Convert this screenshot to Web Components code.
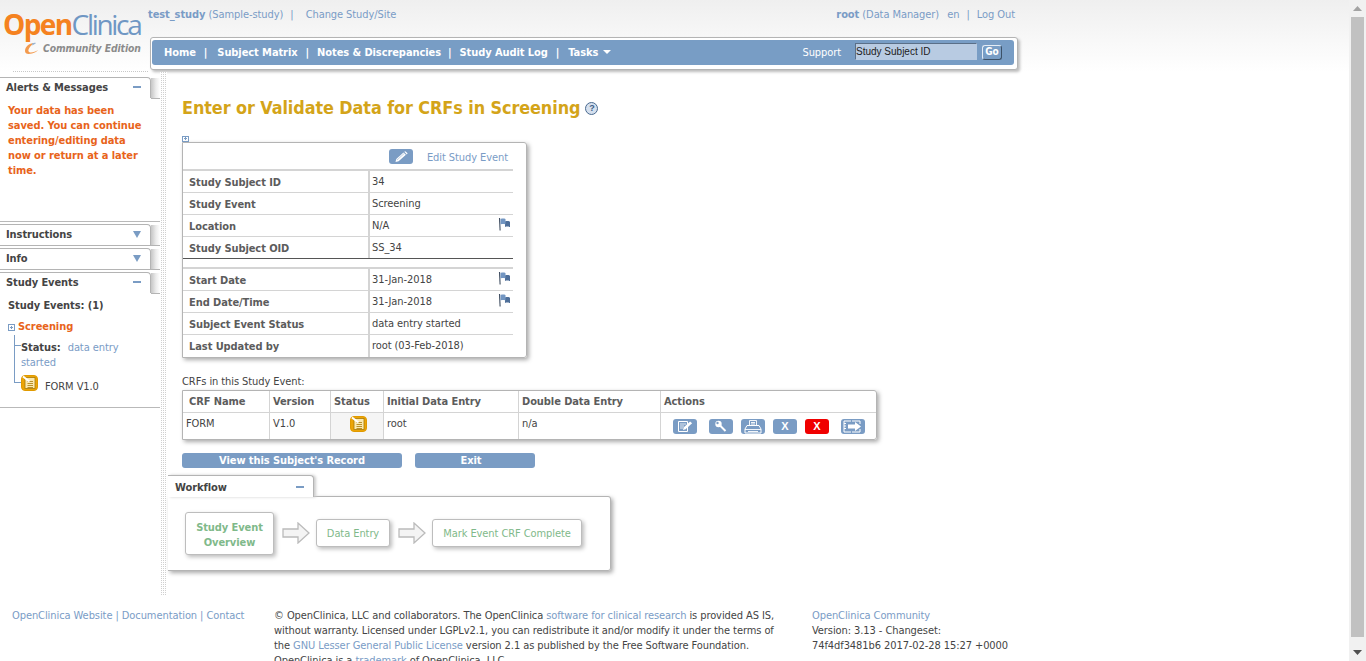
<!DOCTYPE html>
<html>
<head>
<meta charset="utf-8">
<title>OpenClinica</title>
<style>
html, body { margin: 0; height: 100%; overflow: hidden; background: #fff; }
body { font: 11px "DejaVu Sans Condensed", "Noto Sans", sans-serif; letter-spacing: -0.08px; color: #4f4f4f; }
</style>
</head>
<body>
<op-page>
  <op-header slot="head"></op-header>
  <op-sidebar slot="side">
    <op-panel label="Alerts &amp; Messages" open style="height:145px;margin-bottom:2px">
      <div style="padding:5px 14px 0 8px;color:#e8641b;font-weight:700;font-size:11px;line-height:15px;">Your data has been saved. You can continue entering/editing data now or return at a later time.</div>
    </op-panel>
    <op-panel label="Instructions"></op-panel>
    <op-panel label="Info"></op-panel>
    <op-panel label="Study Events" open style="height:136px"><op-event-tree></op-event-tree></op-panel>
  </op-sidebar>
  <op-event-page slot="main"></op-event-page>
  <op-footer slot="foot"></op-footer>
</op-page>
<script>
const LINK = '#7a9cc6';
const SANS = '"DejaVu Sans Condensed", "Noto Sans", sans-serif';

const ICONS = {
    flag: `<svg width="13" height="13" viewBox="0 0 13 13"><path d="M1.500 0l.6 12.500" stroke="#3f4d60" stroke-width="1.100"/><path d="M7 3.500c1.500-.6 3-.4 5 0v5.500c-2-.5-3.500-.6-5 0z" fill="#4f6f99"/><path d="M2.500 1c1.800-.6 3.500-.6 5 0v5.500c-1.500-.6-3.200-.6-5 0z" fill="#7396c2"/></svg>`,
    status: `<svg width="17" height="16" viewBox="0 0 17 16"><rect x=".5" y=".5" width="16" height="15" rx="3.500" fill="#eca507" stroke="#e09a00"/><rect x="4" y="2.500" width="10" height="11" fill="#fbe9b0" stroke="#a87a08" stroke-width=".8"/><path d="M6.500 6.500h5.500M6.500 8.500h5.500M6.500 10.500h5.500M6.500 12.500h5.500" stroke="#a87a08" stroke-width=".8"/><path d="M2 1.500l6.500 5" stroke="#fff" stroke-width="2"/></svg>`,
    edit: `<svg width="16" height="13" viewBox="0 0 16 13" fill="none"><path d="M1.500 1.500h9v10h-9z" stroke="#fff"/><path d="M3 4h6M3 6h4M3 8h3" stroke="#fff" stroke-width=".8"/><path d="M6 10l.6-2.500 6.500-6 2 1.800-6.500 6z" fill="#fff"/></svg>`,
    wrench: `<svg width="14" height="13" viewBox="0 0 14 13"><circle cx="4.500" cy="4" r="3.200" fill="#fff"/><circle cx="3.500" cy="3" r="1.200" fill="#7a9cc4"/><path d="M6 5.500l5.500 5.500" stroke="#fff" stroke-width="2"/></svg>`,
    print: `<svg width="18" height="14" viewBox="0 0 18 14" fill="none" stroke="#fff"><path d="M5.500 5.500v-5h7v5M7 2.500h4M7 4h4" stroke-width=".9"/><path d="M3 5.500h12l2 3.500v4H1V9z"/><path d="M1 9.500h16M4 11.500h10" stroke-width=".9"/></svg>`,
    out: `<svg width="20" height="13" viewBox="0 0 20 13" fill="none"><path d="M8 1H1v11h7M1 3.500h2M1 6h2M1 8.500h2" stroke="#fff"/><path d="M17 4V1H9M17 9v3H9" stroke="#fff"/><path d="M5 4.500h7V2l6 4.500-6 4.500V8.500H5z" fill="#fff"/></svg>`,
    pencil: `<svg width="16" height="12" viewBox="0 0 16 12"><path d="M2.500 11l.8-3 7.200-6.500 2.400 2.200L5.600 10.300z" fill="#fff"/><path d="M11.300.8l1-.6 2.300 2.100-.8 1.200z" fill="#fff"/><path d="M4 9l7-6.300" stroke="#a9bfd9" stroke-width=".7"/></svg>`
};

class OpPage extends HTMLElement {
    constructor () {
        super();
        this.root = this.attachShadow({mode: 'open'});
        this.root.innerHTML = `
            <style>
                :host { display: flex; height: 661px; overflow: hidden; }
                .page { flex: 1; min-width: 0; background: linear-gradient(#efefef, #fff 72px); }
                .middle { display: flex; height: 523px; }
                .strip {
                    width: 7px;
                    background: repeating-conic-gradient(#d0d0d0 0 25%, #fff 0 100%) 0 0 / 2px 2px;
                }
                .main { flex: 1; min-width: 0; }
            </style>
            <div class="page">
                <slot name="head"></slot>
                <div class="middle">
                    <slot name="side"></slot>
                    <div class="strip"></div>
                    <div class="main"><slot name="main"></slot></div>
                </div>
                <slot name="foot"></slot>
            </div>
            <op-scrollbar></op-scrollbar>
        `;
    }
}

class OpScrollbar extends HTMLElement {
    constructor () {
        super();
        this.root = this.attachShadow({mode: 'open'});
        this.root.innerHTML = `
            <style>
                :host { display: flex; flex-direction: column; width: 17px; background: #f1f1f1; align-items: center; }
                .arrow { height: 17px; flex: none; display: flex; align-items: center; justify-content: center; }
                .thumb { flex: 1; width: 13px; background: #c1c1c1; }
                .gap { height: 7px; flex: none; }
            </style>
            <div class="arrow"><svg width="9" height="5"><path d="M0 5L4.500 0 9 5z" fill="#a3a3a3"/></svg></div>
            <div class="thumb"></div>
            <div class="gap"></div>
            <div class="arrow"><svg width="9" height="5"><path d="M0 0h9L4.500 5z" fill="#505050"/></svg></div>
        `;
    }
}

class OpHeader extends HTMLElement {
    constructor () {
        super();
        this.root = this.attachShadow({mode: 'open'});
        this.root.innerHTML = `
            <style>
                :host { display: flex; height: 72px; }
                .link { color: ${LINK}; }
                .logo { width: 148px; flex: none; padding: 6px 0 0 3px; box-sizing: border-box; position: relative; }
                .logo::after { content: ""; position: absolute; left: 13px; right: 0; bottom: 0; border-bottom: 1px dotted #c8c8c8; }
                .word { font: 400 28px/36px "Open Sans", sans-serif; letter-spacing: -2.3px; color: #6f97c4; white-space: nowrap; }
                .word b { color: #f58220; font-weight: 700; letter-spacing: -1.6px; }
                .edition { display: flex; align-items: center; gap: 4px; margin: -1px 0 0 21px; font: italic 700 10.3px/14px ${SANS}; color: #8b8b8b; white-space: nowrap; }
                .rest { width: 870px; flex: none; }
                .top { display: flex; justify-content: space-between; padding: 7px 3px 0 0; height: 37px; box-sizing: border-box; line-height: 15px; white-space: nowrap; }
                .top b { font-weight: 700; }
                .sep { margin: 0 4px; }
                .sep.wide { margin-right: 9px; }
                .en { margin-left: 2px; }
                nav { margin-left: 2px; height: 33px; box-sizing: border-box; background: #fff; border: 1px solid #b4b4b4; border-radius: 3px; padding: 2px 3px 4px 1px; box-shadow: 2px 2px 3px #bbb; }
                .bar { height: 25px; background: #789dc5; border-radius: 3px; display: flex; align-items: center; padding-left: 12px; color: #fff; font-weight: 700; font-size: 11px; white-space: nowrap; }
                .bar i { font-style: normal; margin: 0 8px; font-weight: 700; }
                .bar i.a { margin-right: 10px; }
                .bar i.b { margin-left: 7px; }
                .bar i.c { margin-right: 9px; }
                .caret { display: inline-block; margin-left: 5px; border: 4px solid transparent; border-top: 4px solid #fff; border-bottom: 0; vertical-align: 2px; }
                .right { margin-left: auto; display: flex; align-items: center; }
                .support { font-weight: 400; }
                .search { width: 122px; height: 17px; margin: -2px 0 0 14px; box-sizing: border-box; background: #b8cbe2; border: 1px solid; border-color: #5a6f88 #b8cbe2 #b8cbe2 #5a6f88; color: #222; font: 400 10px/15px "Liberation Sans", sans-serif; letter-spacing: 0; }
                .go { width: 20px; height: 15px; box-sizing: border-box; margin: -1px 12px 0 5px; border: 1px solid #e4ecf5; border-right-color: #3c5168; border-bottom-color: #3c5168; border-radius: 3px; background: #789dc5; font-size: 10px; line-height: 12px; text-align: center; }
            </style>
            <div class="logo">
                <div class="word"><b>Open</b>Clinica</div>
                <div class="edition">
                    <svg width="15" height="13" viewBox="0 0 15 13"><path d="M10 1C5 1 1 5 1 9c0 3 3 3.500 7 2.500 3-.8 5-2 6-3.500-2 1.500-5 2.500-7 2.500S3.500 9 5 6.500 8 3 10 1z" fill="#f39a4e"/><path d="M8 1.500c1-.6 3-1 4-.5-1 1-2 1.500-3.500 2.500z" fill="#9ab5d3"/></svg>
                    <span>Community Edition</span>
                </div>
            </div>
            <div class="rest">
                <div class="top">
                    <div class="link"><b>test_study</b> (Sample-study)<span class="sep wide"> | </span> Change Study/Site</div>
                    <div class="link"><b>root</b> (Data Manager)&nbsp; <span class="en">en</span><span class="sep"> | </span>Log Out</div>
                </div>
                <nav><div class="bar">
                    <span>Home</span><i class="a">|</i><span>Subject Matrix</span><i>|</i><span>Notes &amp; Discrepancies</span><i class="b">|</i><span>Study Audit Log</span><i class="c">|</i><span>Tasks<b class="caret"></b></span>
                    <div class="right">
                        <span class="support">Support</span>
                        <div class="search">Study Subject ID</div>
                        <div class="go">Go</div>
                    </div>
                </div></nav>
            </div>
        `;
    }
}

class OpSidebar extends HTMLElement {
    constructor () {
        super();
        this.root = this.attachShadow({mode: 'open'});
        this.root.innerHTML = `
            <style>
                :host { display: block; width: 160px; flex: none; padding-top: 5px; box-sizing: border-box; }
            </style>
            <slot></slot>
        `;
    }
}

class OpPanel extends HTMLElement {
    constructor () {
        super();
        this.root = this.attachShadow({mode: 'open'});
        const open = this.hasAttribute('open');
        this.root.innerHTML = `
            <style>
                :host { display: block; margin-bottom: 3px; }
                :host([open]) { border-bottom: 1px solid #b9b9b9; box-sizing: border-box; }
                .tabrow { display: flex; height: 21px; }
                .tab {
                    width: 151px; box-sizing: border-box; height: 21px; background: #fff;
                    border: 1px solid #b4b4b4; border-left: 0; border-bottom: 0; border-radius: 0 4px 0 0;
                    ${open ? '' : 'box-shadow: 0 1px 0 #b4b4b4;'}
                    display: flex; align-items: center; justify-content: space-between;
                    padding: 0 9px 2px 6px; font-weight: 700; font-size: 11px; color: #444; white-space: nowrap;
                }
                .fill { flex: 1; background: linear-gradient(90deg, #c6c6c6, #ececec 5px, #fff); border-bottom: 1px solid #b4b4b4; box-sizing: border-box; height: 21px; margin-top: 1px; }
                .minus { width: 8px; height: 2px; background: #7a9cc4; }
                .tri { width: 0; height: 0; border: 4.5px solid transparent; border-top: 7px solid #7a9cc4; border-bottom: 0; }
            </style>
            <div class="tabrow">
                <div class="tab"><span>${this.getAttribute('label').replace('&', '&amp;')}</span><span class="${open ? 'minus' : 'tri'}"></span></div>
                <div class="fill"></div>
            </div>
            <slot></slot>
        `;
    }
}

class OpEventTree extends HTMLElement {
    constructor () {
        super();
        this.root = this.attachShadow({mode: 'open'});
        this.root.innerHTML = `
            <style>
                :host { display: block; font-size: 11px; }
                .count { padding: 5px 0 0 8px; font-weight: 700; color: #444; line-height: 16px; }
                .event { display: flex; align-items: center; gap: 3px; margin: 5px 0 0 8px; color: #e8641b; font-weight: 700; line-height: 16px; }
                .box { width: 7px; height: 7px; box-sizing: border-box; border: 1px solid #7a9cc4; position: relative; }
                .box::before { content: ""; position: absolute; left: 1px; top: 2px; width: 3px; height: 1px; background: #7a9cc4; }
                .box::after { content: ""; position: absolute; left: 2px; top: 1px; width: 1px; height: 3px; background: #7a9cc4; }
                .tree { margin-left: 14px; border-left: 1px solid #7a9cc4; height: 48px; position: relative; }
                .status { padding: 5px 30px 0 6px; line-height: 15px; color: ${LINK}; }
                .status b { color: #444; margin-right: 4px; }
                .status::before { content: ""; position: absolute; left: 0; top: 10px; width: 6px; height: 1px; background: #7a9cc4; }
                .form { display: flex; margin: -8px 0 0 14px; height: 18px; color: #444; position: relative; }
                .form::before { content: ""; position: absolute; left: 0; top: 7px; width: 7px; height: 1px; background: #7a9cc4; }
                .form svg { margin: 0 7px; }
                .form span { padding-top: 4px; line-height: 15px; }
            </style>
            <div class="count">Study Events: (1)</div>
            <div class="event"><span class="box"></span>Screening</div>
            <div class="tree"><div class="status"><b>Status:</b> data entry started</div></div>
            <div class="form">${ICONS.status}<span>FORM V1.0</span></div>
        `;
    }
}

class OpEventPage extends HTMLElement {
    constructor () {
        super();
        this.root = this.attachShadow({mode: 'open'});
        this.root.innerHTML = `
            <style>
                :host { display: block; padding: 24px 0 0 15px; font-size: 11px; color: #444; }
                h1 { margin: 0; font: 700 17.85px/24px ${SANS}; color: #d4a419; display: flex; align-items: center; gap: 5px; }
                .help { width: 11px; height: 11px; border-radius: 50%; border: 1px solid #4a6a90; background: #d5e0ee; color: #3c5d86; font: 700 9px/11px "Liberation Sans", sans-serif; text-align: center; }
                .plus { display: block; width: 7px; height: 6px; border: 1px solid #7a9cc4; box-sizing: border-box; margin-top: 16px; position: relative; }
                .plus::before { content: ""; position: absolute; left: 1px; top: 1px; width: 3px; height: 1px; background: #7a9cc4; }
                .plus::after { content: ""; position: absolute; left: 2px; top: 0; width: 1px; height: 3px; background: #7a9cc4; }
                .cap { margin-top: 17px; line-height: 14px; }
                .btns { display: flex; gap: 13px; margin-top: 13px; margin-bottom: 7px; }
                .btn { height: 15px; border-radius: 3px; background: #7a9cc4; color: #fff; font-weight: 700; font-size: 11px; line-height: 15px; text-align: center; }
                op-workflow { margin-left: -14px; }
            </style>
            <h1>Enter or Validate Data for CRFs in Screening <span class="help">?</span></h1>
            <span class="plus"></span>
            <op-info-box></op-info-box>
            <div class="cap">CRFs in this Study Event:</div>
            <op-crf-table></op-crf-table>
            <div class="btns">
                <div class="btn" style="width:220px">View this Subject's Record</div>
                <div class="btn" style="width:112px;padding-right:8px">Exit</div>
            </div>
            <op-workflow></op-workflow>
        `;
    }
}

class OpInfoBox extends HTMLElement {
    constructor () {
        super();
        this.root = this.attachShadow({mode: 'open'});
        const row = (k, v, flag) => `
            <div class="row"><div class="k">${k}</div><div class="v"><span>${v}</span>${flag ? ICONS.flag : ''}</div></div>`;
        this.root.innerHTML = `
            <style>
                :host { display: block; width: 345px; box-sizing: border-box; border: 1px solid #b4b4b4; border-radius: 0 3px 3px 0; box-shadow: 2px 2px 4px #aaa; padding-right: 13px; height: 216px; }
                .edit { height: 28px; display: flex; align-items: center; justify-content: flex-end; gap: 14px; padding: 2px 5px 0 0; color: ${LINK}; box-sizing: border-box; border-bottom: 2px solid #d4d4d4; }
                .pen { width: 24px; height: 15px; background: #7a9cc4; border-radius: 3px; display: flex; align-items: center; justify-content: center; margin-top: -1px; }
                .row { display: flex; height: 22px; box-sizing: border-box; border-bottom: 1px solid #d4d4d4; }
                .row:last-child { border-bottom: 0; }
                .k { width: 187px; box-sizing: border-box; padding: 4px 0 0 6px; font-weight: 700; color: #5c5c5c; border-right: 2px solid #d4d4d4; line-height: 15px; white-space: nowrap; }
                .v { flex: 1; display: flex; justify-content: space-between; padding: 3px 2px 0 2px; line-height: 15px; }
                .rule { height: 11px; margin-top: -1px; box-sizing: border-box; border-top: 1px solid #555; border-bottom: 2px solid #d4d4d4; position: relative; background: #fff; }
            </style>
            <div class="edit"><span class="pen">${ICONS.pencil}</span><span>Edit Study Event</span></div>
            ${row('Study Subject ID', '34')}
            ${row('Study Event', 'Screening')}
            ${row('Location', 'N/A', true)}
            ${row('Study Subject OID', 'SS_34').replace('class="row"', 'class="row" style="border:0"')}
            <div class="rule"></div>
            ${row('Start Date', '31-Jan-2018', true)}
            ${row('End Date/Time', '31-Jan-2018', true)}
            ${row('Subject Event Status', 'data entry started')}
            ${row('Last Updated by', 'root (03-Feb-2018)')}
        `;
    }
}

class OpCrfTable extends HTMLElement {
    constructor () {
        super();
        this.root = this.attachShadow({mode: 'open'});
        const act = (svg, bg) => `<span class="act" style="background:${bg || '#7a9cc4'}">${svg}</span>`;
        this.root.innerHTML = `
            <style>
                :host { display: block; width: 695px; box-sizing: border-box; border: 1px solid #b4b4b4; border-radius: 0 3px 3px 0; box-shadow: 2px 2px 4px #aaa; margin-top: 1px; }
                .grid { display: grid; grid-template-columns: 87px 61px 53px 135px 142px 1fr; }
                .h, .c { box-sizing: border-box; border-right: 1px solid #d4d4d4; white-space: nowrap; }
                .h:nth-child(6), .c:last-child { border-right: 0; }
                .h { height: 22px; border-bottom: 1px solid #d4d4d4; padding: 3px 0 0 3px; font-weight: 700; color: #5c5c5c; line-height: 15px; }
                .c { height: 26px; padding: 3px 0 0 3px; line-height: 15px; }
                .c.st { background: #f5f5f5; padding: 3px 0 0 19px; }
                .c.acts { display: flex; padding: 6px 0 0 12px; }
                .act { width: 24px; height: 15px; border-radius: 3px; display: flex; align-items: center; justify-content: center; margin-right: 8px; color: #fff; font: 700 11px/15px "Liberation Sans", sans-serif; flex: none; }
                .act:first-child, .act:nth-child(5) { margin-right: 12px; }
            </style>
            <div class="grid">
                <div class="h" style="padding-left:6px">CRF Name</div><div class="h">Version</div><div class="h">Status</div><div class="h">Initial Data Entry</div><div class="h">Double Data Entry</div><div class="h">Actions</div>
                <div class="c">FORM</div><div class="c">V1.0</div><div class="c st">${ICONS.status}</div><div class="c">root</div><div class="c">n/a</div>
                <div class="c acts">${act(ICONS.edit)}${act(ICONS.wrench)}${act(ICONS.print)}${act('X')}${act('X', '#f00000')}${act(ICONS.out)}</div>
            </div>
        `;
    }
}

class OpWorkflow extends HTMLElement {
    constructor () {
        super();
        this.root = this.attachShadow({mode: 'open'});
        const arrow = `<svg width="28" height="22" viewBox="0 0 28 22"><path d="M1 7h15V1l11 10-11 10v-6H1z" fill="#f4f4f4" stroke="#bbb" stroke-width="1.300"/></svg>`;
        this.root.innerHTML = `
            <style>
                :host { display: block; width: 443px; }
                .tab { width: 146px; height: 22px; box-sizing: border-box; background: #fff; border: 1px solid #b4b4b4; border-left: 0; border-bottom: 0; border-radius: 0 4px 0 0; box-shadow: 2px 0 3px #ccc; display: flex; justify-content: space-between; align-items: center; padding: 1px 9px 0 7px; font-weight: 700; color: #444; position: relative; z-index: 1; margin-bottom: -1px; }
                .minus { width: 8px; height: 2px; background: #7a9cc4; }
                .box { height: 75px; box-sizing: border-box; border: 1px solid #b4b4b4; border-left: 0; border-radius: 0 3px 3px 0; box-shadow: 2px 2px 4px #aaa; display: flex; align-items: center; padding: 0 0 1px 17px; }
                .step { box-sizing: border-box; background: #fff; border: 1px solid #bdbdbd; border-radius: 3px; box-shadow: 2px 2px 4px #bbb; color: #7fb98a; text-align: center; }
                .step.now { width: 89px; height: 43px; font-weight: 700; line-height: 15px; padding-top: 7px; }
                .step.next { height: 28px; line-height: 28px; }
                svg { margin: 0 6px 0 8px; flex: none; }
            </style>
            <div class="tab"><span>Workflow</span><span class="minus"></span></div>
            <div class="box">
                <div class="step now">Study Event Overview</div>
                ${arrow}
                <div class="step next" style="width:74px">Data Entry</div>
                ${arrow}
                <div class="step next" style="width:150px">Mark Event CRF Complete</div>
            </div>
        `;
    }
}

class OpFooter extends HTMLElement {
    constructor () {
        super();
        this.root = this.attachShadow({mode: 'open'});
        this.root.innerHTML = `
            <style>
                :host { display: flex; padding-top: 13px; font-size: 11px; line-height: 15px; color: #444; white-space: nowrap; }
                a { color: ${LINK}; text-decoration: none; }
                .l { width: 274px; padding-left: 12px; box-sizing: border-box; flex: none; color: ${LINK}; }
                .m { width: 538px; flex: none; }
            </style>
            <div class="l"><a>OpenClinica Website</a> | <a>Documentation</a> | <a>Contact</a></div>
            <div class="m">© OpenClinica, LLC and collaborators. The OpenClinica <a>software for clinical research</a> is provided AS IS,<br>without warranty. Licensed under LGPLv2.1, you can redistribute it and/or modify it under the terms of<br>the <a>GNU Lesser General Public License</a> version 2.1 as published by the Free Software Foundation.<br>OpenClinica is a <a>trademark</a> of OpenClinica, LLC.</div>
            <div class="r"><a>OpenClinica Community</a><br>Version: 3.13 - Changeset:<br>74f4df3481b6 2017-02-28 15:27 +0000</div>
        `;
    }
}

customElements.define('op-page', OpPage);
customElements.define('op-scrollbar', OpScrollbar);
customElements.define('op-header', OpHeader);
customElements.define('op-sidebar', OpSidebar);
customElements.define('op-panel', OpPanel);
customElements.define('op-event-tree', OpEventTree);
customElements.define('op-event-page', OpEventPage);
customElements.define('op-info-box', OpInfoBox);
customElements.define('op-crf-table', OpCrfTable);
customElements.define('op-workflow', OpWorkflow);
customElements.define('op-footer', OpFooter);
</script>
</body>
</html>
